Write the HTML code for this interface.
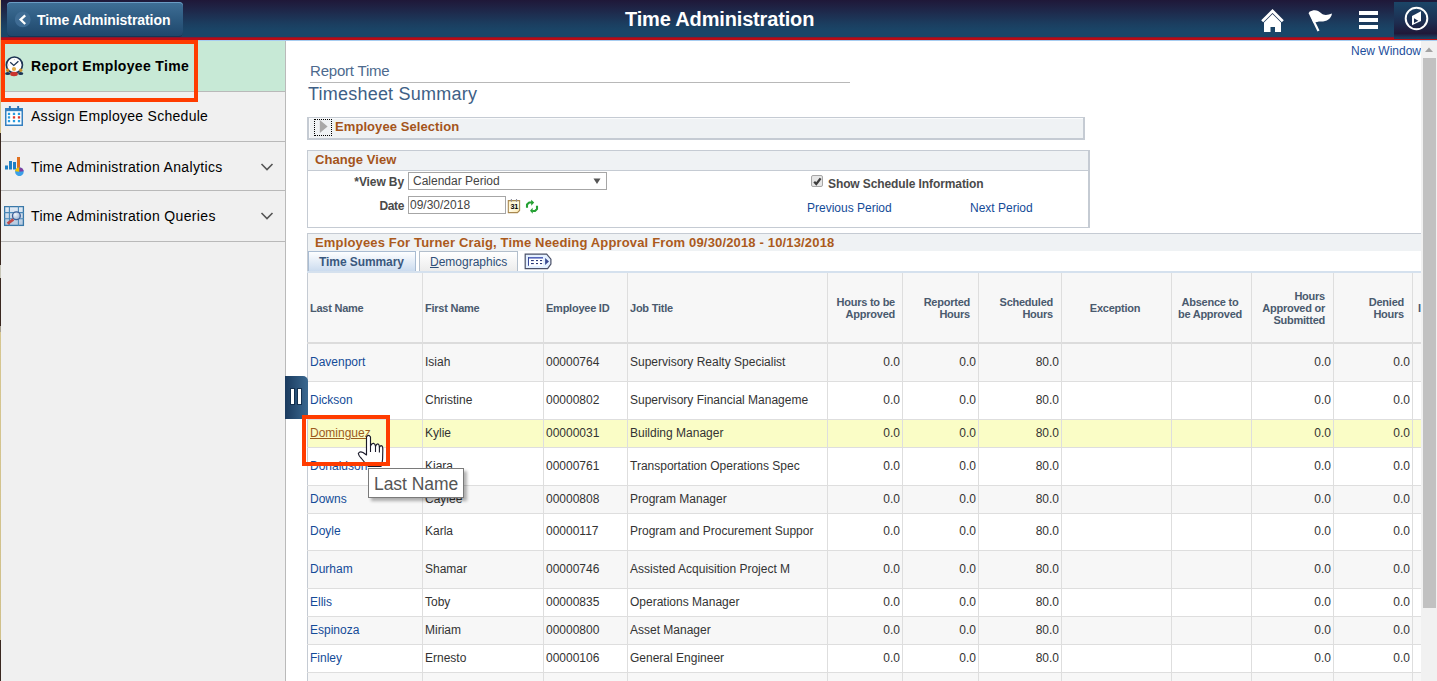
<!DOCTYPE html>
<html><head><meta charset="utf-8">
<style>
*{box-sizing:border-box;margin:0;padding:0}
html,body{width:1437px;height:681px;overflow:hidden;background:#fff;font-family:"Liberation Sans",sans-serif;color:#333}
.a{position:absolute;white-space:nowrap}
#hdr{position:absolute;left:0;top:0;width:1437px;height:37px;background:linear-gradient(#1f1838 0px,#1e2a4c 12px,#1b3e60 24px,#1a4668 31px,#1a4668 37px)}
#red{position:absolute;left:0;top:37px;width:1437px;height:3px;background:linear-gradient(#8a1830 0,#8a1830 1px,#b80d14 1px)}
#blue{position:absolute;left:0;top:40px;width:1437px;height:1px;background:#a8cdf0}
#back{position:absolute;left:7px;top:2px;width:176px;height:35px;border-radius:4px;background:linear-gradient(#3f6f96,#2d5a80 50%,#1f466a);box-shadow:inset 0 1px 0 #6a9cc4,inset 0 -1px 0 #163654}
.t12{font-size:12px;line-height:14px}
.t11b{font-size:11px;line-height:12px;font-weight:bold;color:#4a5a6e;letter-spacing:-0.24px}
.ltxt{font-size:14px;line-height:16px;letter-spacing:0.28px;color:#000}
.lnk{color:#144b98}
.num{text-align:right}
.ttl{font-size:13px;line-height:15px;font-weight:bold;color:#a4541a;letter-spacing:0.08px}
</style></head><body>
<div id="hdr"></div>
<div id="red"></div>
<div id="blue"></div>
<div id="back"></div>
<svg class="a" style="left:15px;top:11px" width="17" height="17"><circle cx="7.8" cy="8.4" r="7.9" fill="#3f6c94"/><path d="M10.2 4.3 L5.6 8.6 L10.2 13" stroke="#fff" stroke-width="2.3" fill="none"/></svg>
<div class="a" style="left:37px;top:12px;font-size:14px;line-height:16px;font-weight:bold;color:#fff;letter-spacing:-0.06px">Time Administration</div>
<div class="a" style="left:625px;top:8px;font-size:20px;line-height:22px;font-weight:bold;color:#fff;letter-spacing:-0.16px">Time Administration</div>
<!-- header icons -->
<svg class="a" style="left:1258px;top:6px" width="30" height="30">
 <path d="M4.2 15.2 L14.5 4.9 L24.8 15.2" stroke="#fff" stroke-width="2.8" fill="none" stroke-linecap="butt"/>
 <path d="M6 16.5 L14.5 8 L23 16.5 V26 H17 V21 H12.5 V26 H6 Z" fill="#fff"/>
</svg>
<svg class="a" style="left:1305px;top:7px" width="32" height="28">
 <path d="M4.5 5.5 L13.5 24" stroke="#fff" stroke-width="2.2"/>
 <path d="M4 5 C9 2 13 3 16 6 C19 9 23 8 27 6.5 C26 12 22 14.5 16 14.5 C13 14.5 11 15 8.5 16 Z" fill="#fff"/>
</svg>
<div class="a" style="left:1359px;top:11px;width:19px;height:4px;background:#fff"></div>
<div class="a" style="left:1359px;top:18px;width:19px;height:4px;background:#fff"></div>
<div class="a" style="left:1359px;top:25px;width:19px;height:4px;background:#fff"></div>
<div class="a" style="left:1394px;top:2px;width:43px;height:37px;background:linear-gradient(#1b4668,#1d2d50 55%,#1f1838 85%,#1b3e60 97%)"></div>
<div class="a" style="left:1394px;top:39px;width:43px;height:1px;background:#b80d14"></div>
<svg class="a" style="left:1403px;top:5px" width="27" height="27">
 <circle cx="13.5" cy="13.5" r="10.8" stroke="#fff" stroke-width="2" fill="none"/>
 <path d="M9 11 L18 6.2 L18 16 L9 20.3 Z" fill="#fff"/>
 <path d="M11 13.2 L15.3 15.8 L11 18 Z" fill="#1d2d50"/>
</svg>
<!-- left panel -->
<div class="a" style="left:0;top:41px;width:285px;height:640px;background:#f0f0f0"></div>
<div class="a" style="left:0;top:41px;width:285px;height:50px;background:#c7e9d6"></div>
<div class="a" style="left:0;top:91px;width:285px;height:1px;background:#b9b9b9"></div>
<div class="a" style="left:0;top:141px;width:285px;height:1px;background:#b9b9b9"></div>
<div class="a" style="left:0;top:190px;width:285px;height:1px;background:#b9b9b9"></div>
<div class="a" style="left:0;top:241px;width:285px;height:1px;background:#b9b9b9"></div>
<div class="a" style="left:285px;top:41px;width:1px;height:640px;background:#bababa"></div>
<div class="a" style="left:0;top:0;width:1px;height:681px;background:linear-gradient(#d6c690 0px,#d0c08a 133px,#3a2820 133px,#3a2820 265px,#c8c6b8 265px,#c8c6b8 278px,#3a2820 278px,#3a2820 326px,#a8a090 326px,#a8a090 332px,#d6c690 332px,#d0c08a 640px,#3a2820 640px)"></div>
<div class="a ltxt" style="left:31px;top:58px;font-weight:bold;letter-spacing:0.33px">Report Employee Time</div>
<div class="a ltxt" style="left:31px;top:108px">Assign Employee Schedule</div>
<div class="a ltxt" style="left:31px;top:159px;letter-spacing:0.35px">Time Administration Analytics</div>
<div class="a ltxt" style="left:31px;top:208px;letter-spacing:0.35px">Time Administration Queries</div>
<svg class="a" style="left:260px;top:162px" width="14" height="10"><path d="M1.5 2 L7 7.5 L12.5 2" stroke="#555" stroke-width="1.6" fill="none"/></svg>
<svg class="a" style="left:260px;top:211px" width="14" height="10"><path d="M1.5 2 L7 7.5 L12.5 2" stroke="#555" stroke-width="1.6" fill="none"/></svg>
<!-- clock icon -->
<svg class="a" style="left:3px;top:54px" width="24" height="24">
 <circle cx="11.4" cy="11" r="8" fill="#fff" stroke="#1d3554" stroke-width="1.7"/>
 <path d="M11.4 5 V6.2 M5 11 H6 M17.8 11 H18.8" stroke="#b8c0c8" stroke-width="0.8"/>
 <path d="M7.2 8.3 L10.8 11.4 L15.4 7.2" stroke="#1d3554" stroke-width="1.3" fill="none"/>
 <circle cx="11" cy="15" r="2.1" fill="#e5ae48"/>
 <ellipse cx="11" cy="20" rx="3.9" ry="2.2" fill="#c9342e"/>
 <circle cx="4.7" cy="16.3" r="1.7" fill="#c8902a"/>
 <circle cx="17.7" cy="16.3" r="1.7" fill="#c8902a"/>
 <ellipse cx="4.7" cy="19.4" rx="2.6" ry="1.5" fill="#1d3554"/>
 <ellipse cx="17.7" cy="19.4" rx="2.6" ry="1.5" fill="#1d3554"/>
</svg>
<!-- calendar icon -->
<svg class="a" style="left:4px;top:105px" width="21" height="22">
 <rect x="1.75" y="3.75" width="16.5" height="16.5" fill="#fff" stroke="#3580c0" stroke-width="1.5"/>
 <rect x="1" y="3" width="18" height="3.2" fill="#3580c0"/>
 <rect x="4.9" y="1" width="1.9" height="3.8" fill="#2a70b0"/><rect x="13.2" y="1" width="1.9" height="3.8" fill="#2a70b0"/>
 <rect x="3.85" y="7.75" width="2.3" height="2.3" fill="#2a9de0"/><rect x="8.85" y="7.75" width="2.3" height="2.3" fill="#2a9de0"/><rect x="13.85" y="7.75" width="2.3" height="2.3" fill="#2a9de0"/><rect x="3.85" y="11.25" width="2.3" height="2.3" fill="#2a9de0"/><rect x="8.85" y="11.25" width="2.3" height="2.3" fill="#e0392b"/><rect x="13.85" y="11.25" width="2.3" height="2.3" fill="#e0392b"/><rect x="3.85" y="14.950000000000001" width="2.3" height="2.3" fill="#2a9de0"/><rect x="8.85" y="14.950000000000001" width="2.3" height="2.3" fill="#2a9de0"/><rect x="13.85" y="14.950000000000001" width="2.3" height="2.3" fill="#2a9de0"/>
</svg>
<!-- analytics icon -->
<svg class="a" style="left:4px;top:156px" width="22" height="20">
 <g fill="#1f7fc4"><rect x="1" y="9.5" width="3" height="4"/><rect x="5" y="5" width="3" height="8.5"/><rect x="9" y="6" width="3" height="7.5"/></g>
 <rect x="13" y="1" width="3" height="12.5" fill="#e07020"/>
 <circle cx="15.4" cy="15.8" r="4.3" fill="#3aa0e8"/>
 <path d="M15.4 15.8 L11.1 15.3 A4.3 4.3 0 0 1 15.4 11.5 Z" fill="#f0c000"/>
 <path d="M15.4 15.8 L15.4 11.5 A4.3 4.3 0 0 1 19.7 15.3 Z" fill="#8040a0"/>
</svg>
<!-- query icon -->
<svg class="a" style="left:4px;top:206px" width="21" height="21">
 <defs><linearGradient id="qg" x1="0" y1="0" x2="0" y2="1"><stop offset="0" stop-color="#e4ecf6"/><stop offset="1" stop-color="#b4c8de"/></linearGradient>
 <radialGradient id="lg" cx="0.35" cy="0.35" r="0.7"><stop offset="0" stop-color="#f0f4fa"/><stop offset="1" stop-color="#9ab4d4"/></radialGradient></defs>
 <rect x="0.6" y="0.6" width="18.8" height="18.8" fill="url(#qg)" stroke="#3a78a8" stroke-width="1.3"/>
 <path d="M5.4 0 V20 M14.4 0 V20 M0 6.6 H20 M0 12.8 H20" stroke="#4a88b8" stroke-width="1.1"/>
 <circle cx="12.4" cy="9.8" r="3.9" fill="url(#lg)" stroke="#3d5f98" stroke-width="1.3"/>
 <path d="M9.4 13.3 L3.6 17.6" stroke="#c04848" stroke-width="2.8"/>
</svg>
<!-- red highlight box left -->
<div class="a" style="left:1px;top:40px;width:197px;height:62px;border:4px solid #ff3c00"></div>

<!-- content -->
<div class="a t12 lnk" style="left:1351px;top:44px;color:#1d4e9c">New Window</div>
<div class="a" style="left:310px;top:62px;font-size:15px;line-height:17px;color:#4d6a8e;letter-spacing:-0.2px">Report Time</div>
<div class="a" style="left:310px;top:82px;width:540px;height:1px;background:#b8b8b8"></div>
<div class="a" style="left:308px;top:84px;font-size:18px;line-height:20px;color:#3e5f86;letter-spacing:0.22px">Timesheet Summary</div>

<!-- employee selection -->
<div class="a" style="left:307px;top:117px;width:778px;height:23px;background:#eff2f4;border:1px solid #c5cbd3;border-bottom-width:2px;border-right-width:2px;border-left-width:2px;box-shadow:inset 1px 1px 0 #fafbfc"></div>
<div class="a" style="left:314px;top:119px;width:18px;height:17px;border:1px dotted #000"></div>
<svg class="a" style="left:319px;top:119px" width="10" height="16"><path d="M0.8 1 L8.6 7.5 L0.8 14 Z" fill="#a8a8a8"/></svg>
<div class="a ttl" style="left:335px;top:119px">Employee Selection</div>

<!-- change view -->
<div class="a" style="left:307px;top:150px;width:783px;height:78px;background:#fff;border:1px solid #c5cbd3;border-right-width:2px"></div>
<div class="a" style="left:308px;top:151px;width:780px;height:19px;background:#eff2f4"></div>
<div class="a" style="left:308px;top:170px;width:780px;height:1px;background:#c5cbd3"></div>
<div class="a ttl" style="left:315px;top:152px">Change View</div>
<div class="a t12" style="left:304px;width:100px;text-align:right;top:175px;font-weight:bold;color:#4a4a4a;letter-spacing:-0.1px">*View By</div>
<div class="a" style="left:408px;top:172px;width:199px;height:18px;border:1px solid #a6a6a6;background:#fff"></div>
<div class="a t12" style="left:413px;top:174px;color:#444">Calendar Period</div>
<svg class="a" style="left:593px;top:178px" width="9" height="7"><path d="M0.5 0.5 H7.5 L4 6 Z" fill="#555"/></svg>
<div class="a t12" style="left:304px;width:100px;text-align:right;top:199px;font-weight:bold;color:#4a4a4a;letter-spacing:-0.4px">Date</div>
<div class="a" style="left:408px;top:196px;width:98px;height:18px;border:1px solid #a6a6a6;background:#fff"></div>
<div class="a t12" style="left:410px;top:198px;color:#444">09/30/2018</div>
<svg class="a" style="left:507px;top:198px" width="14" height="16">
 <defs><linearGradient id="cg" x1="0" y1="0" x2="1" y2="1"><stop offset="0" stop-color="#fff2c0"/><stop offset="0.5" stop-color="#fffbe8"/><stop offset="1" stop-color="#fde6a8"/></linearGradient></defs>
 <path d="M1.3 2.6 H12.6 V12.4 L10.4 14.6 H1.3 Z" fill="url(#cg)" stroke="#a88850" stroke-width="1.1"/>
 <path d="M4.4 1 V3.8 M9.5 1 V3.8" stroke="#8a8c9a" stroke-width="1.1"/>
 <text x="3.6" y="10.9" font-family="Liberation Sans" font-size="7.2" font-weight="bold" fill="#000" letter-spacing="-0.3">31</text>
</svg>
<svg class="a" style="left:524px;top:199px" width="16" height="16">
 <path d="M3 8.8 V5.6 L5.2 3.5 H8.2" stroke="#24a032" stroke-width="2.1" fill="none" stroke-linejoin="round"/>
 <path d="M7.2 0.8 L10.2 3.6 L7.2 6.8 Z" fill="#24a032"/>
 <path d="M13 6.8 V10.1 L11 12 H8.2" stroke="#24a032" stroke-width="2.1" fill="none" stroke-linejoin="round"/>
 <path d="M8.6 8.8 L6 11.8 L8.8 14.8 Z" fill="#24a032"/>
</svg>
<div class="a" style="left:811px;top:175px;width:12px;height:12px;border:1px solid #a6a6a6;border-radius:2px;background:#e6e6e6"></div>
<svg class="a" style="left:812px;top:176px" width="11" height="11"><path d="M2.2 5.8 L4.3 8 L8.6 2.4" stroke="#3e3e3e" stroke-width="2.3" fill="none"/></svg>
<div class="a t12" style="left:828px;top:177px;font-weight:bold;color:#4a4a4a;letter-spacing:-0.1px">Show Schedule Information</div>
<div class="a t12 lnk" style="left:807px;top:201px">Previous Period</div>
<div class="a t12 lnk" style="left:970px;top:201px">Next Period</div>

<!-- grid title -->
<div class="a" style="left:307px;top:233px;width:1114px;height:18px;background:#eff2f4;border-top:1px solid #c5cbd3;border-left:1px solid #c5cbd3"></div>
<div class="a ttl" style="left:315px;top:235px;letter-spacing:0.16px;color:#ab5a1c">Employees For Turner Craig, Time Needing Approval From 09/30/2018 - 10/13/2018</div>
<div class="a" style="left:307px;top:251px;width:1114px;height:22px;background:#fff;border-left:1px solid #c5cbd3"></div>
<div class="a" style="left:308px;top:251px;width:108px;height:21px;background:linear-gradient(#fdfeff,#c9daee);border:1px solid #a9bcd2;border-bottom:none"></div>
<div class="a t12" style="left:319px;top:255px;font-weight:bold;color:#3a587e;letter-spacing:-0.08px">Time Summary</div>
<div class="a" style="left:419px;top:251px;width:99px;height:20px;background:linear-gradient(#fff,#ececec);border:1px solid #b3bfcc;border-bottom:none"></div>
<div class="a t12" style="left:430px;top:255px;color:#2f4f78"><u>D</u>emographics</div>
<svg class="a" style="left:524px;top:253px" width="28" height="17">
 <path d="M1.2 1.2 H22.7 L26.9 6.2 V11.1 L23.6 15.7 H1.2 Z" fill="#e4f0ff" stroke="#4a5068" stroke-width="1.2"/>
 <rect x="4" y="4" width="15" height="8.8" fill="#fff"/>
 <rect x="4" y="4" width="15" height="1.6" fill="#5566bb"/><rect x="4" y="4" width="1" height="8.8" fill="#3a4a9a"/>
 <g fill="#2a3a7a"><rect x="7" y="7" width="2.8" height="1.1"/><rect x="12" y="7" width="2" height="1.1"/><rect x="16" y="7" width="2.1" height="1.1"/>
 <rect x="7" y="10" width="2.8" height="1.1"/><rect x="12" y="10" width="2" height="1.1"/><rect x="16" y="10" width="2.1" height="1.1"/></g>
 <path d="M21.1 4.9 L25 8.5 L21.1 12 Z" fill="#3a4a90"/>
</svg>
<div class="a" style="left:307px;top:271px;width:1114px;height:2px;background:#d5e1ee"></div>
<!-- grid header -->
<div class="a" style="left:307px;top:273px;width:1114px;height:408px;background:#f7f7f7;border-left:1px solid #c5cbd3"></div>
<div class="a" style="left:307px;top:342px;width:1114px;height:2px;background:#dcdcdc"></div>
<div class="a t11b" style="left:310px;top:302px">Last Name</div>
<div class="a t11b" style="left:425px;top:302px">First Name</div>
<div class="a t11b" style="left:546px;top:302px">Employee ID</div>
<div class="a t11b" style="left:630px;top:302px">Job Title</div>
<div class="a t11b" style="left:795px;width:100px;text-align:right;top:296px">Hours to be<br>Approved</div>
<div class="a t11b" style="left:870px;width:100px;text-align:right;top:296px">Reported<br>Hours</div>
<div class="a t11b" style="left:953px;width:100px;text-align:right;top:296px">Scheduled<br>Hours</div>
<div class="a t11b" style="left:1060px;width:110px;text-align:center;top:302px">Exception</div>
<div class="a t11b" style="left:1170px;width:80px;text-align:center;top:296px">Absence to<br>be Approved</div>
<div class="a t11b" style="left:1225px;width:100px;text-align:right;top:290px">Hours<br>Approved or<br>Submitted</div>
<div class="a t11b" style="left:1304px;width:100px;text-align:right;top:296px">Denied<br>Hours</div>
<div class="a t11b" style="left:1418px;top:302px">I</div>
<div class="a" style="left:308px;top:344px;width:1113px;height:38px;background:#f7f7f7"></div>
<div class="a t12 lnk" style="left:310px;top:355px">Davenport</div>
<div class="a t12" style="left:425px;top:355px">Isiah</div>
<div class="a t12" style="left:546px;top:355px">00000764</div>
<div class="a t12" style="left:630px;top:355px">Supervisory Realty Specialist</div>
<div class="a t12 num" style="left:840px;width:60px;top:355px">0.0</div>
<div class="a t12 num" style="left:916px;width:60px;top:355px">0.0</div>
<div class="a t12 num" style="left:999px;width:60px;top:355px">80.0</div>
<div class="a t12 num" style="left:1271px;width:60px;top:355px">0.0</div>
<div class="a t12 num" style="left:1350px;width:60px;top:355px">0.0</div>
<div class="a" style="left:307px;top:381px;width:1114px;height:1px;background:#dedede"></div>
<div class="a" style="left:308px;top:382px;width:1113px;height:38px;background:#ffffff"></div>
<div class="a t12 lnk" style="left:310px;top:393px">Dickson</div>
<div class="a t12" style="left:425px;top:393px">Christine</div>
<div class="a t12" style="left:546px;top:393px">00000802</div>
<div class="a t12" style="left:630px;top:393px">Supervisory Financial Manageme</div>
<div class="a t12 num" style="left:840px;width:60px;top:393px">0.0</div>
<div class="a t12 num" style="left:916px;width:60px;top:393px">0.0</div>
<div class="a t12 num" style="left:999px;width:60px;top:393px">80.0</div>
<div class="a t12 num" style="left:1271px;width:60px;top:393px">0.0</div>
<div class="a t12 num" style="left:1350px;width:60px;top:393px">0.0</div>
<div class="a" style="left:307px;top:419px;width:1114px;height:1px;background:#dedede"></div>
<div class="a" style="left:308px;top:420px;width:1113px;height:28px;background:#fafdc6"></div>
<div class="a t12" style="left:310px;top:426px;color:#9c5a1c;text-decoration:underline">Dominguez</div>
<div class="a t12" style="left:425px;top:426px">Kylie</div>
<div class="a t12" style="left:546px;top:426px">00000031</div>
<div class="a t12" style="left:630px;top:426px">Building Manager</div>
<div class="a t12 num" style="left:840px;width:60px;top:426px">0.0</div>
<div class="a t12 num" style="left:916px;width:60px;top:426px">0.0</div>
<div class="a t12 num" style="left:999px;width:60px;top:426px">80.0</div>
<div class="a t12 num" style="left:1271px;width:60px;top:426px">0.0</div>
<div class="a t12 num" style="left:1350px;width:60px;top:426px">0.0</div>
<div class="a" style="left:307px;top:447px;width:1114px;height:1px;background:#dedede"></div>
<div class="a" style="left:308px;top:448px;width:1113px;height:38px;background:#ffffff"></div>
<div class="a t12 lnk" style="left:310px;top:459px">Donaldson</div>
<div class="a t12" style="left:425px;top:459px">Kiara</div>
<div class="a t12" style="left:546px;top:459px">00000761</div>
<div class="a t12" style="left:630px;top:459px">Transportation Operations Spec</div>
<div class="a t12 num" style="left:840px;width:60px;top:459px">0.0</div>
<div class="a t12 num" style="left:916px;width:60px;top:459px">0.0</div>
<div class="a t12 num" style="left:999px;width:60px;top:459px">80.0</div>
<div class="a t12 num" style="left:1271px;width:60px;top:459px">0.0</div>
<div class="a t12 num" style="left:1350px;width:60px;top:459px">0.0</div>
<div class="a" style="left:307px;top:485px;width:1114px;height:1px;background:#dedede"></div>
<div class="a" style="left:308px;top:486px;width:1113px;height:28px;background:#f7f7f7"></div>
<div class="a t12 lnk" style="left:310px;top:492px">Downs</div>
<div class="a t12" style="left:425px;top:492px">Caylee</div>
<div class="a t12" style="left:546px;top:492px">00000808</div>
<div class="a t12" style="left:630px;top:492px">Program Manager</div>
<div class="a t12 num" style="left:840px;width:60px;top:492px">0.0</div>
<div class="a t12 num" style="left:916px;width:60px;top:492px">0.0</div>
<div class="a t12 num" style="left:999px;width:60px;top:492px">80.0</div>
<div class="a t12 num" style="left:1271px;width:60px;top:492px">0.0</div>
<div class="a t12 num" style="left:1350px;width:60px;top:492px">0.0</div>
<div class="a" style="left:307px;top:513px;width:1114px;height:1px;background:#dedede"></div>
<div class="a" style="left:308px;top:514px;width:1113px;height:37px;background:#ffffff"></div>
<div class="a t12 lnk" style="left:310px;top:524px">Doyle</div>
<div class="a t12" style="left:425px;top:524px">Karla</div>
<div class="a t12" style="left:546px;top:524px">00000117</div>
<div class="a t12" style="left:630px;top:524px">Program and Procurement Suppor</div>
<div class="a t12 num" style="left:840px;width:60px;top:524px">0.0</div>
<div class="a t12 num" style="left:916px;width:60px;top:524px">0.0</div>
<div class="a t12 num" style="left:999px;width:60px;top:524px">80.0</div>
<div class="a t12 num" style="left:1271px;width:60px;top:524px">0.0</div>
<div class="a t12 num" style="left:1350px;width:60px;top:524px">0.0</div>
<div class="a" style="left:307px;top:550px;width:1114px;height:1px;background:#dedede"></div>
<div class="a" style="left:308px;top:551px;width:1113px;height:38px;background:#f7f7f7"></div>
<div class="a t12 lnk" style="left:310px;top:562px">Durham</div>
<div class="a t12" style="left:425px;top:562px">Shamar</div>
<div class="a t12" style="left:546px;top:562px">00000746</div>
<div class="a t12" style="left:630px;top:562px">Assisted Acquisition Project M</div>
<div class="a t12 num" style="left:840px;width:60px;top:562px">0.0</div>
<div class="a t12 num" style="left:916px;width:60px;top:562px">0.0</div>
<div class="a t12 num" style="left:999px;width:60px;top:562px">80.0</div>
<div class="a t12 num" style="left:1271px;width:60px;top:562px">0.0</div>
<div class="a t12 num" style="left:1350px;width:60px;top:562px">0.0</div>
<div class="a" style="left:307px;top:588px;width:1114px;height:1px;background:#dedede"></div>
<div class="a" style="left:308px;top:589px;width:1113px;height:28px;background:#ffffff"></div>
<div class="a t12 lnk" style="left:310px;top:595px">Ellis</div>
<div class="a t12" style="left:425px;top:595px">Toby</div>
<div class="a t12" style="left:546px;top:595px">00000835</div>
<div class="a t12" style="left:630px;top:595px">Operations Manager</div>
<div class="a t12 num" style="left:840px;width:60px;top:595px">0.0</div>
<div class="a t12 num" style="left:916px;width:60px;top:595px">0.0</div>
<div class="a t12 num" style="left:999px;width:60px;top:595px">80.0</div>
<div class="a t12 num" style="left:1271px;width:60px;top:595px">0.0</div>
<div class="a t12 num" style="left:1350px;width:60px;top:595px">0.0</div>
<div class="a" style="left:307px;top:616px;width:1114px;height:1px;background:#dedede"></div>
<div class="a" style="left:308px;top:617px;width:1113px;height:28px;background:#f7f7f7"></div>
<div class="a t12 lnk" style="left:310px;top:623px">Espinoza</div>
<div class="a t12" style="left:425px;top:623px">Miriam</div>
<div class="a t12" style="left:546px;top:623px">00000800</div>
<div class="a t12" style="left:630px;top:623px">Asset Manager</div>
<div class="a t12 num" style="left:840px;width:60px;top:623px">0.0</div>
<div class="a t12 num" style="left:916px;width:60px;top:623px">0.0</div>
<div class="a t12 num" style="left:999px;width:60px;top:623px">80.0</div>
<div class="a t12 num" style="left:1271px;width:60px;top:623px">0.0</div>
<div class="a t12 num" style="left:1350px;width:60px;top:623px">0.0</div>
<div class="a" style="left:307px;top:644px;width:1114px;height:1px;background:#dedede"></div>
<div class="a" style="left:308px;top:645px;width:1113px;height:28px;background:#ffffff"></div>
<div class="a t12 lnk" style="left:310px;top:651px">Finley</div>
<div class="a t12" style="left:425px;top:651px">Ernesto</div>
<div class="a t12" style="left:546px;top:651px">00000106</div>
<div class="a t12" style="left:630px;top:651px">General Engineer</div>
<div class="a t12 num" style="left:840px;width:60px;top:651px">0.0</div>
<div class="a t12 num" style="left:916px;width:60px;top:651px">0.0</div>
<div class="a t12 num" style="left:999px;width:60px;top:651px">80.0</div>
<div class="a t12 num" style="left:1271px;width:60px;top:651px">0.0</div>
<div class="a t12 num" style="left:1350px;width:60px;top:651px">0.0</div>
<div class="a" style="left:307px;top:672px;width:1114px;height:1px;background:#dedede"></div>
<div class="a" style="left:308px;top:673px;width:1113px;height:28px;background:#f7f7f7"></div>
<div class="a" style="left:307px;top:700px;width:1114px;height:1px;background:#dedede"></div>
<div class="a" style="left:422px;top:273px;width:1px;height:408px;background:#dedede"></div>
<div class="a" style="left:543px;top:273px;width:1px;height:408px;background:#dedede"></div>
<div class="a" style="left:627px;top:273px;width:1px;height:408px;background:#dedede"></div>
<div class="a" style="left:827px;top:273px;width:1px;height:408px;background:#dedede"></div>
<div class="a" style="left:902px;top:273px;width:1px;height:408px;background:#dedede"></div>
<div class="a" style="left:978px;top:273px;width:1px;height:408px;background:#dedede"></div>
<div class="a" style="left:1061px;top:273px;width:1px;height:408px;background:#dedede"></div>
<div class="a" style="left:1171px;top:273px;width:1px;height:408px;background:#dedede"></div>
<div class="a" style="left:1251px;top:273px;width:1px;height:408px;background:#dedede"></div>
<div class="a" style="left:1333px;top:273px;width:1px;height:408px;background:#dedede"></div>
<div class="a" style="left:1412px;top:273px;width:1px;height:408px;background:#dedede"></div><!-- scrollbar -->
<div class="a" style="left:1421px;top:41px;width:16px;height:640px;background:#f1f1f1"></div>
<svg class="a" style="left:1424px;top:46px" width="10" height="7"><path d="M1 6 L5 1.5 L9 6 Z" fill="#a3a3a3"/></svg>
<div class="a" style="left:1423px;top:58px;width:13px;height:550px;background:#c1c1c1"></div>
<!-- pause tab -->
<div class="a" style="left:285px;top:376px;width:23px;height:43px;border-radius:0 5px 0 0;background:linear-gradient(90deg,#1a3a5e,#3a6890)"></div>
<div class="a" style="left:290px;top:388px;width:5px;height:17px;background:#fff;border:1px solid #13304f"></div>
<div class="a" style="left:297px;top:388px;width:5px;height:17px;background:#fff;border:1px solid #13304f"></div>
<!-- tooltip -->
<div class="a" style="left:368px;top:468px;width:96px;height:30px;background:#fff;border:1px solid #7a7a7a;box-shadow:3px 3px 3px rgba(0,0,0,0.3)"></div>
<div class="a" style="left:374px;top:475px;font-size:17.5px;line-height:19px;color:#555;letter-spacing:-0.05px">Last Name</div>
<!-- hand cursor -->
<svg class="a" style="left:356px;top:433px" width="32" height="36">
 <path d="M10.5 4 Q12.5 0.8 14.5 4 L14.5 13 Q15.8 10 17.6 10.4 Q19.3 10.8 19.5 13.5 Q20.6 10.6 22.2 11 Q23.4 11.5 23.4 14.5 Q24.3 12.2 25.6 12.8 Q27 13.5 26.8 17 L26.6 26 Q26.3 30.5 25 33.5 L12.5 33.5 Q8.5 29.5 5.5 25.5 Q2.5 22.5 2.3 20.5 Q3.8 17.8 7 19.5 L10.5 22 Z" fill="#fff" stroke="#1a1a2a" stroke-width="1.15" stroke-linejoin="round"/>
 <path d="M14.5 13 L14.5 19 M19.5 13.5 L19.5 19 M23.4 14.5 L23.4 19.5" stroke="#1a1a2a" stroke-width="1.1"/>
</svg>
<!-- red box dominguez -->
<div class="a" style="left:302px;top:415px;width:88px;height:51px;border:4px solid #ff3c00"></div>
</body></html>
